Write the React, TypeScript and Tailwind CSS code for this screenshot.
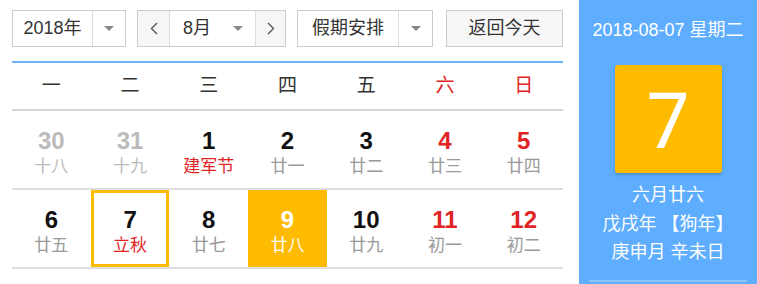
import React from 'react';

type Day = { d: number; lunar: string; other?: boolean; weekend?: boolean; festival?: boolean; today?: boolean; hover?: boolean };

const weekdays = ['一', '二', '三', '四', '五', '六', '日'];

const rows: Day[][] = [
  [
    { d: 30, lunar: '十八', other: true },
    { d: 31, lunar: '十九', other: true },
    { d: 1, lunar: '建军节', festival: true },
    { d: 2, lunar: '廿一' },
    { d: 3, lunar: '廿二' },
    { d: 4, lunar: '廿三', weekend: true },
    { d: 5, lunar: '廿四', weekend: true },
  ],
  [
    { d: 6, lunar: '廿五' },
    { d: 7, lunar: '立秋', festival: true, today: true },
    { d: 8, lunar: '廿七' },
    { d: 9, lunar: '廿八', hover: true },
    { d: 10, lunar: '廿九' },
    { d: 11, lunar: '初一', weekend: true },
    { d: 12, lunar: '初二', weekend: true },
  ],
];

const Caret = () => (
  <svg width="10" height="6" viewBox="0 0 10 6">
    <path d="M0 0 L10 0 L5 5 Z" fill="#888" />
  </svg>
);

const Chevron = ({ dir }: { dir: 'l' | 'r' }) => (
  <svg width="8" height="13" viewBox="0 0 8 13">
    <path d={dir === 'l' ? 'M7 1 L1.5 6.5 L7 12' : 'M1 1 L6.5 6.5 L1 12'} fill="none" stroke="#555" strokeWidth="1.4" />
  </svg>
);

export default function App() {
  return (
    <div
      className="flex w-[757px] h-[284px] bg-white overflow-hidden"
      style={{ fontFamily: '"Liberation Sans", "Noto Sans CJK SC", sans-serif' }}
    >
      {/* ── left calendar ── */}
      <div className="w-[579px] pl-[12px] pt-[10px]">
        <div className="flex items-center h-[37px] w-[551px] text-[18px] text-[#333]">
          <div className="flex h-full w-[114px] border border-[#ccc]">
            <div className="w-[80px] flex items-center justify-center border-r border-[#ddd]">2018年</div>
            <div className="flex-1 flex items-center justify-center"><Caret /></div>
          </div>
          <div className="flex h-full w-[149px] ml-[11px] border border-[#ccc]">
            <div className="w-[32px] flex items-center justify-center bg-[#f6f6f6] border-r border-[#ddd]"><Chevron dir="l" /></div>
            <div className="w-[85px] flex items-center justify-between pl-[13px] pr-[12px]">
              <span>8月</span>
              <Caret />
            </div>
            <div className="flex-1 flex items-center justify-center bg-[#f6f6f6] border-l border-[#ddd]"><Chevron dir="r" /></div>
          </div>
          <div className="flex h-full w-[136px] ml-[11px] border border-[#ccc]">
            <div className="w-[101px] flex items-center justify-center border-r border-[#ddd]">假期安排</div>
            <div className="flex-1 flex items-center justify-center"><Caret /></div>
          </div>
          <div className="flex h-full flex-1 ml-[13px] items-center justify-center border border-[#ccc] bg-[#f6f6f6]">返回今天</div>
        </div>

        <div className="w-[551px] mt-[14px] border-t-2 border-[#6cb4f8]">
          <div className="grid grid-cols-7 h-[48px] border-b-2 border-[#d6d6d6]">
            {weekdays.map((w, i) => (
              <div key={w} className={`flex items-center justify-center text-[19px] ${i >= 5 ? 'text-[#e02424]' : 'text-[#333]'}`}>{w}</div>
            ))}
          </div>
          {rows.map((row, ri) => (
            <div key={ri} className="grid grid-cols-7 h-[79px] border-b-2 border-[#dedede]">
              {row.map(c => {
                const numColor = c.hover ? 'text-white' : c.other ? 'text-[#bbb]' : c.weekend ? 'text-[#e02424]' : 'text-[#111]';
                const lunarColor = c.hover ? 'text-white' : c.festival ? 'text-[#e02424]' : c.other ? 'text-[#bbb]' : 'text-[#999]';
                return (
                  <div
                    key={c.d}
                    className={`flex flex-col items-center ${c.hover ? 'bg-[#ffbb00]' : ''} ${c.today ? 'border-[3px] border-[#ffbb00] pt-[13px]' : 'pt-[16px]'}`}
                  >
                    <span className={`text-[24px] font-bold leading-[28px] ${numColor}`}>{c.d}</span>
                    <span className={`text-[17px] leading-[24px] ${lunarColor}`}>{c.lunar}</span>
                  </div>
                );
              })}
            </div>
          ))}
        </div>
      </div>

      {/* ── right panel ── */}
      <div className="flex-1 bg-[#5eadff] flex flex-col items-center text-white">
        <div className="mt-[18px] text-[18px] leading-[24px]">2018-08-07 星期二</div>
        <div className="mt-[23px] w-[107px] h-[108px] bg-[#ffbb00] rounded-[3px] shadow-[0_2px_3px_rgba(0,0,0,0.18)] flex items-center justify-center">
          <span className="text-[76px] leading-none" style={{ fontFamily: '"Noto Sans", sans-serif' }}>7</span>
        </div>
        <div className="mt-[8px] text-[18px] leading-[28.5px] text-center">
          <div>六月廿六</div>
          <div>戊戌年 【狗年】</div>
          <div>庚申月 辛未日</div>
        </div>
        <div className="mt-[13px] w-[158px] h-[2px] bg-white/30" />
      </div>
    </div>
  );
}
